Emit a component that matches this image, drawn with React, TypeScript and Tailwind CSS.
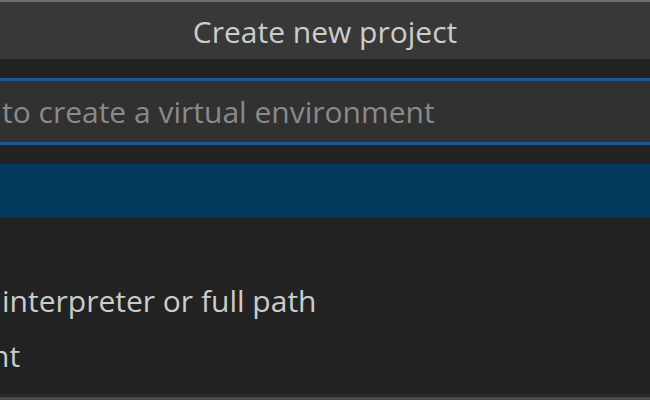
import React from 'react';

const FONT = { fontFamily: '"Open Sans", "Noto Sans", sans-serif' };

export default function App() {
  return (
    <div
      className="w-[650px] h-[400px] overflow-hidden flex flex-col bg-[#222222] text-[#cccccc]"
      style={FONT}
    >
      <div className="h-[2px] bg-[#6e6e6e]" />
      <div className="h-[57px] bg-[#383838] flex items-center justify-center text-[30px] text-[#cccccc] pt-[2px]">
        Create new project
      </div>

      <div className="pt-[19px]">
        <div className="h-[67px] border-y-[3px] border-[#1b5a92] bg-[#313131] flex items-center pl-[2px] text-[30px] text-[#8a8a8a] whitespace-nowrap">
          to create a virtual environment
        </div>
      </div>

      <div className="pt-[19px] flex flex-col text-[30px] whitespace-nowrap">
        <div className="h-[54px] bg-[#04395e]" />
        <div className="h-[55px]" />
        <div className="h-[55px] flex items-center pl-[2px]">interpreter or full path</div>
        <div className="h-[55px] flex items-center -ml-[9px]">nt</div>
      </div>

      <div className="mt-auto h-[3px] bg-[#2a2a2a]" />
      <div className="h-[3px] bg-[#484848]" />
    </div>
  );
}
